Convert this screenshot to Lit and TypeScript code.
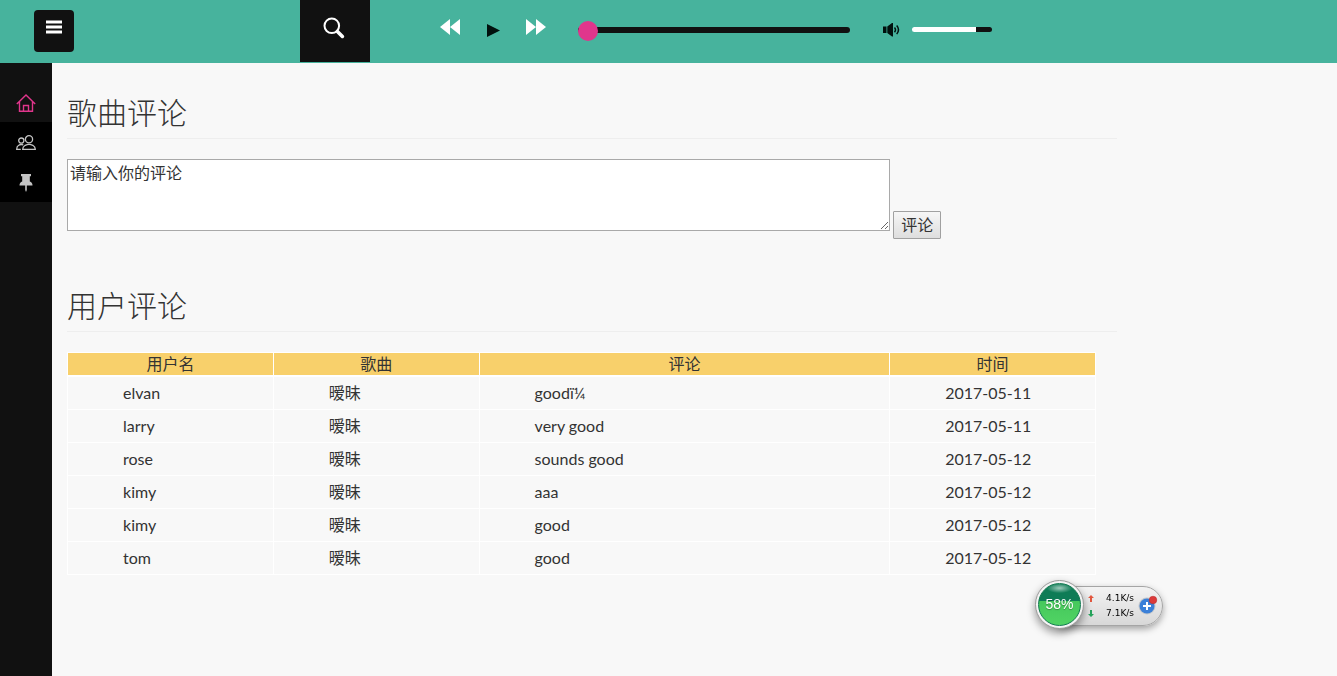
import { LitElement, html, css, svg } from "lit";
import { customElement, state } from "lit/decorators.js";

interface Comment {
  user: string;
  song: string;
  text: string;
  date: string;
}

const COMMENTS: Comment[] = [
  { user: "elvan", song: "暧昧", text: "goodï¼", date: "2017-05-11" },
  { user: "larry", song: "暧昧", text: "very good", date: "2017-05-11" },
  { user: "rose", song: "暧昧", text: "sounds good", date: "2017-05-12" },
  { user: "kimy", song: "暧昧", text: "aaa", date: "2017-05-12" },
  { user: "kimy", song: "暧昧", text: "good", date: "2017-05-12" },
  { user: "tom", song: "暧昧", text: "good", date: "2017-05-12" },
];

const icon = (w: number, h: number, body: unknown) =>
  html`<svg width=${w} height=${h} viewBox="0 0 ${w} ${h}" aria-hidden="true">${body}</svg>`;

const menuIcon = icon(16, 14, svg`<path fill="#fff" d="M0 .5h16v3H0zM0 5.5h16v3H0zM0 10.5h16v3H0z"/>`);
const searchIcon = icon(22, 22, svg`<circle cx="8.8" cy="8.8" r="7.3" fill="none" stroke="#fff" stroke-width="2"/><path d="M14.4 14.4l5 5" stroke="#fff" stroke-width="3.6" stroke-linecap="round"/>`);
const prevIcon = icon(20, 16, svg`<path fill="#fff" d="M10 0v16L0 8zM20 0v16L10 8z"/>`);
const playIcon = icon(13, 13, svg`<path fill="#01110e" d="M0 0l13 6.5L0 13z"/>`);
const nextIcon = icon(20, 16, svg`<path fill="#fff" d="M0 0v16l10-8zM10 0v16l10-8z"/>`);
const volumeIcon = icon(17, 14, svg`<path fill="#01110e" d="M0 3.5h3.500v6.500H0zM4.300 3.500L9 0h1v13.500H9L4.300 10z"/><path d="M11.500 4.500q2 2.300 0 4.700M13.700 2.500q3.600 4.200 0 8.600" fill="none" stroke="#01110e" stroke-width="1.500"/>`);
const homeIcon = icon(20, 18, svg`<path d="M.8 10L10 1l9.200 9M3.500 7.800v9.500h13V7.800M7.500 17.300v-5.800h5v5.800" fill="none" stroke="#e0368c" stroke-width="1.400"/>`);
const peopleIcon = icon(20, 16, svg`<g fill="none" stroke="#c4c4c4" stroke-width="1.300"><circle cx="13" cy="4.300" r="3.600"/><circle cx="5.300" cy="5.600" r="2.600"/><path d="M6.700 14.300q0-2.500 2.500-4 3.800-1.800 7.600 0 2.500 1.500 2.500 4zM4.800 14.300H.7q0-3 2-4.100 2-1.200 4.600-.3"/></g>`);
const pinIcon = icon(14, 18, svg`<path fill="#c4c4c4" d="M2 0h10v2.200h-1.200v5.300q2.700.8 2.700 4H.5q0-3.200 2.700-4V2.200H2zM6.200 11h1.600v5L7 18l-.8-2z"/>`);

@customElement("player-bar")
export class PlayerBar extends LitElement {
  @state() private position = 0;
  @state() private volume = 80;

  static styles = css`
    :host {
      display: flex;
      height: 63px;
      background: #47b39d;
    }
    button {
      border: 0;
      padding: 0;
      background: none;
      cursor: pointer;
    }
    svg { display: block; }
    .brand {
      box-sizing: border-box;
      flex: 0 0 300px;
      padding: 10px 34px;
    }
    .menu {
      display: flex;
      justify-content: center;
      align-items: flex-start;
      width: 40px;
      height: 42px;
      padding-top: 10px;
      border-radius: 4px;
      background: #111;
    }
    .search {
      display: flex;
      justify-content: center;
      flex: 0 0 70px;
      height: 62px;
      padding: 17px 2px 0 0;
      background: #111;
    }
    .controls {
      display: flex;
      align-items: center;
      gap: 26px;
      height: 54px;
      margin-left: 70px;
    }
    .play { padding: 6px 0 0 1px; }
    .sliders {
      display: flex;
      align-items: center;
      height: 60px;
      margin-left: 32px;
    }
    input {
      appearance: none;
      margin: 0;
      background: none;
      outline: none;
    }
    .seek { width: 272px; height: 20px; }
    .seek::-webkit-slider-runnable-track {
      height: 6px;
      border-radius: 3px;
      background: #111;
    }
    .seek::-webkit-slider-thumb {
      appearance: none;
      width: 20px;
      height: 20px;
      margin-top: -6px;
      border-radius: 50%;
      background: #e0368c;
    }
    .mute { margin: 0 12px 0 33px; }
    .volume { width: 80px; height: 5px; margin-bottom: 1px; }
    .volume::-webkit-slider-runnable-track {
      height: 5px;
      border-radius: 3px;
      background: linear-gradient(to right, #fff var(--level), #111 var(--level));
    }
    .volume::-webkit-slider-thumb {
      appearance: none;
      width: 1px;
      height: 5px;
      opacity: 0;
    }
  `;

  render() {
    return html`
      <div class="brand"><button class="menu" aria-label="菜单">${menuIcon}</button></div>
      <button class="search" aria-label="搜索">${searchIcon}</button>
      <div class="controls">
        <button aria-label="上一首">${prevIcon}</button>
        <button class="play" aria-label="播放">${playIcon}</button>
        <button aria-label="下一首">${nextIcon}</button>
      </div>
      <div class="sliders">
        <input class="seek" type="range" aria-label="播放进度" min="0" max="100"
          .value=${String(this.position)}
          @input=${(e: Event) => (this.position = +(e.target as HTMLInputElement).value)}>
        <button class="mute" aria-label="静音">${volumeIcon}</button>
        <input class="volume" type="range" aria-label="音量" min="0" max="100"
          style="--level: ${this.volume}%"
          .value=${String(this.volume)}
          @input=${(e: Event) => (this.volume = +(e.target as HTMLInputElement).value)}>
      </div>
    `;
  }
}

@customElement("side-nav")
export class SideNav extends LitElement {
  static styles = css`
    :host {
      display: block;
      flex: 0 0 52px;
      padding-top: 19px;
      background: #111;
    }
    a {
      box-sizing: border-box;
      display: flex;
      align-items: center;
      justify-content: center;
      height: 40px;
      padding-top: 2px;
      background: #000;
    }
    .active { background: #111; }
  `;

  render() {
    return html`
      <nav>
        <a class="active" href="#home" aria-label="首页">${homeIcon}</a>
        <a href="#friends" aria-label="好友">${peopleIcon}</a>
        <a href="#pinned" aria-label="收藏">${pinIcon}</a>
      </nav>
    `;
  }
}

@customElement("speed-widget")
export class SpeedWidget extends LitElement {
  static styles = css`
    :host {
      position: fixed;
      right: 174px;
      bottom: 47px;
      display: flex;
      align-items: flex-start;
    }
    .ball {
      position: relative;
      box-sizing: border-box;
      width: 49px;
      height: 49px;
      padding: 2px;
      border: 1px solid #999;
      border-radius: 50%;
      background: #f4f4f4;
      box-shadow: 0 4px 8px rgba(0, 0, 0, 0.4);
    }
    .fill {
      box-sizing: border-box;
      height: 43px;
      border: 1px solid #117a50;
      border-radius: 50%;
      background:
        radial-gradient(ellipse 13px 5px at 50% 10%, rgba(255, 255, 255, 0.6), transparent),
        linear-gradient(#0e7c56 42%, #46c85c 42%, #50d464);
      color: #fff;
      font: 14px/41px "Liberation Sans", sans-serif;
      text-align: center;
      text-shadow: 0 1px 1px rgba(0, 0, 0, 0.3);
    }
    .panel {
      box-sizing: border-box;
      display: flex;
      align-items: center;
      width: 104px;
      height: 40px;
      margin: 6px 0 0 -25px;
      padding-left: 28px;
      border: 1px solid #a5a5a5;
      border-radius: 0 20px 20px 0;
      background: linear-gradient(#f3f3f3, #d8d8d8);
      box-shadow: 0 3px 7px rgba(0, 0, 0, 0.35);
    }
    .rates {
      width: 46px;
      color: #000;
      font: 9px/15px "DejaVu Sans", sans-serif;
    }
    .rate {
      display: flex;
      align-items: center;
      justify-content: space-between;
      white-space: nowrap;
    }
    .add {
      margin-left: 4px;
      padding: 0 0 2px;
      border: 0;
      background: none;
    }
    svg { display: block; }
  `;

  render() {
    return html`
      <div class="ball"><div class="fill">58%</div></div>
      <div class="panel">
        <div class="rates">
          <div class="rate">${icon(6, 7, svg`<path fill="#e2573e" d="M3 0l3 3H4v4H2V3H0z"/>`)}<span>4.1K/s</span></div>
          <div class="rate">${icon(6, 7, svg`<path fill="#26a45c" d="M3 7L0 4h2V0h2v4h2z"/>`)}<span>7.1K/s</span></div>
        </div>
        <button class="add" aria-label="加速">
          ${icon(20, 20, svg`<circle cx="9" cy="11" r="8.500" fill="#c2c6cb"/><circle cx="9" cy="11" r="7.500" fill="#3b80d8"/><path d="M9 7v8M5 11h8" stroke="#fff" stroke-width="2"/><circle cx="15" cy="5" r="3.800" fill="#dc3a3a" stroke="#b22a2a" stroke-width=".5"/>`)}
        </button>
      </div>
    `;
  }
}

@customElement("app-root")
export class AppRoot extends LitElement {
  static styles = css`
    :host {
      display: flex;
      flex-direction: column;
      min-height: 100vh;
      background: #f8f8f8;
      color: #333;
      font: 16px/22px Lato, "Noto Sans CJK SC", sans-serif;
    }
    .body {
      display: flex;
      flex: 1;
    }
    main {
      flex: 1;
      max-width: 1050px;
      padding: 32px 15px;
    }
    h1 {
      margin: 0 0 20px;
      padding-bottom: 9px;
      border-bottom: 1px solid #eee;
      font-size: 30px;
      font-weight: 300;
      line-height: 34px;
    }
    form {
      display: flex;
      align-items: flex-end;
      gap: 3px;
      width: 98%;
      margin-bottom: 49px;
    }
    textarea {
      box-sizing: border-box;
      width: 80%;
      height: 72px;
      margin: 0 0 8px;
      padding: 2px;
      border: 1px solid #a9a9a9;
      border-radius: 0;
      background: #fff;
      color: #333;
      font: inherit;
    }
    .submit {
      box-sizing: border-box;
      height: 28px;
      padding: 0 7px;
      border: 1px solid #a0a0a0;
      border-radius: 1px;
      background: linear-gradient(#f6f6f6, #dedede);
      color: #333;
      font: inherit;
    }
    table {
      width: 98%;
      border-collapse: collapse;
      table-layout: fixed;
    }
    th, td { border: 1px solid #fff; }
    th {
      width: 20%;
      height: 22px;
      padding: 0;
      border-bottom-width: 2px;
      background: #f8d06b;
      font-weight: 400;
      line-height: 22px;
    }
    .wide { width: 40%; }
    td {
      padding: 5px 0 5px 55px;
      line-height: 22px;
    }
  `;

  render() {
    return html`
      <player-bar></player-bar>
      <div class="body">
        <side-nav></side-nav>
        <main>
          <h1>歌曲评论</h1>
          <form @submit=${(e: Event) => e.preventDefault()}>
            <textarea aria-label="评论内容" .value=${"请输入你的评论"}></textarea>
            <button class="submit">评论</button>
          </form>
          <h1>用户评论</h1>
          <table>
            <thead>
              <tr><th>用户名</th><th>歌曲</th><th class="wide">评论</th><th>时间</th></tr>
            </thead>
            <tbody>
              ${COMMENTS.map(
                (c) => html`<tr><td>${c.user}</td><td>${c.song}</td><td>${c.text}</td><td>${c.date}</td></tr>`
              )}
            </tbody>
          </table>
        </main>
      </div>
      <speed-widget></speed-widget>
    `;
  }
}
